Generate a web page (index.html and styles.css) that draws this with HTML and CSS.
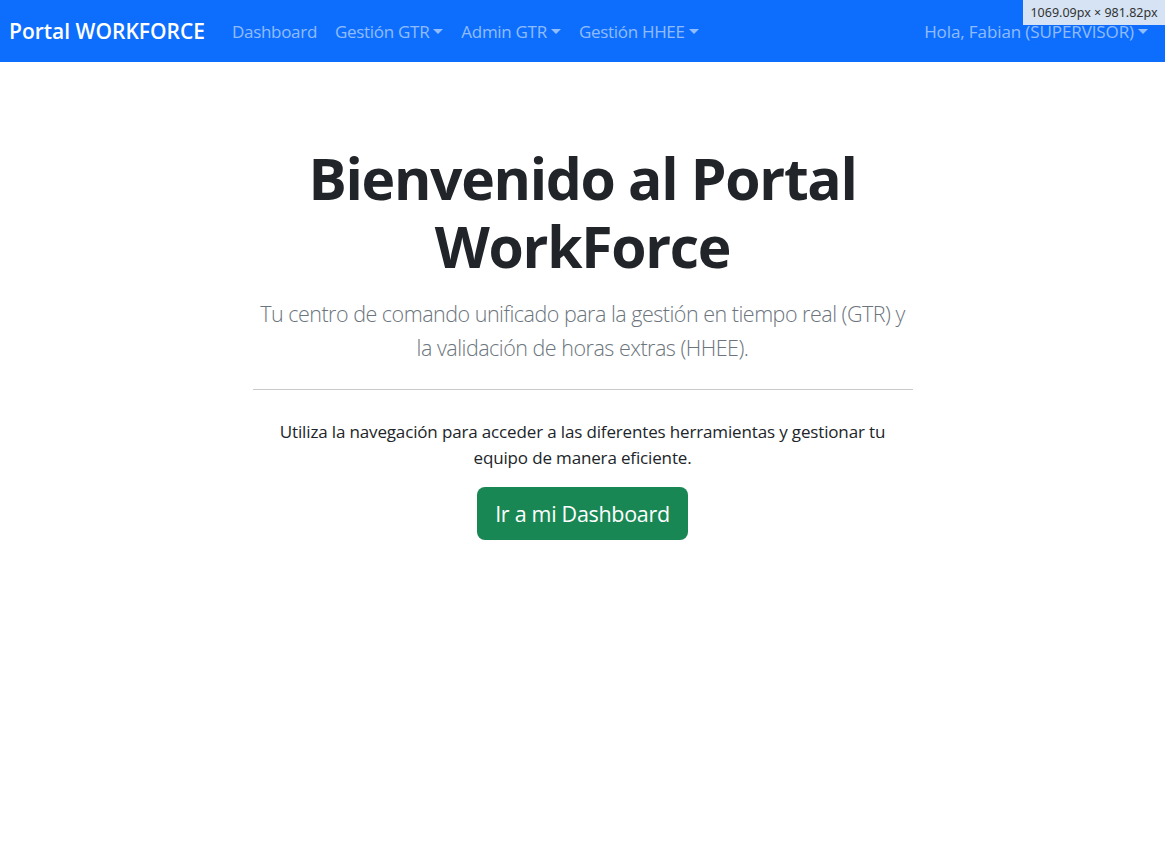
FILE: index.html
```html
<!DOCTYPE html>
<html lang="es">
<head>
<meta charset="utf-8">
<title>Portal WORKFORCE</title>
<link rel="stylesheet" href="styles.css">
</head>
<body>
<nav class="navbar">
  <div class="nav-inner">
    <a class="brand" href="#">Portal WORKFORCE</a>
    <ul class="nav-links">
      <li><a class="nav-link" href="#">Dashboard</a></li>
      <li><a class="nav-link dropdown" href="#">Gestión GTR</a></li>
      <li><a class="nav-link dropdown" href="#">Admin GTR</a></li>
      <li><a class="nav-link dropdown" href="#">Gestión HHEE</a></li>
    </ul>
    <ul class="nav-links nav-right">
      <li><a class="nav-link dropdown" href="#">Hola, Fabian (SUPERVISOR)</a></li>
    </ul>
  </div>
</nav>
<main class="hero">
  <h1 class="hero-title">Bienvenido al Portal WorkForce</h1>
  <p class="lead">Tu centro de comando unificado para la gestión en tiempo real (GTR) y la validación de horas extras (HHEE).</p>
  <hr class="divider">
  <p class="intro">Utiliza la navegación para acceder a las diferentes herramientas y gestionar tu equipo de manera eficiente.</p>
  <a class="btn-success" href="#">Ir a mi Dashboard</a>
</main>
<div class="size-tip">1069.09px × 981.82px</div>
</body>
</html>
```
FILE: styles.css
```css
* { box-sizing: border-box; }
html, body { margin: 0; padding: 0; }
body {
  font-family: "Open Sans", "Noto Sans", sans-serif;
  color: #212529;
  background: #fff;
  font-size: 17.4px;
  line-height: 1.5;
}
a { text-decoration: none; }

.navbar {
  background: #0d6efd;
  height: 62px;
}
.nav-inner {
  height: 100%;
  display: flex;
  align-items: center;
  padding: 1px 8px 0 9px;
}
.brand {
  color: #fff;
  font-size: 21px;
  font-weight: 600;
  margin-right: 18px;
  white-space: nowrap;
}
.nav-links {
  list-style: none;
  margin: 0;
  padding: 0;
  display: flex;
}
.nav-right { margin-left: auto; }
.nav-link {
  display: block;
  color: rgba(255, 255, 255, 0.55);
  font-size: 17px;
  letter-spacing: -0.3px;
  padding: 8px 9px;
  white-space: nowrap;
}
.nav-right .nav-link { letter-spacing: -0.1px; }
.dropdown::after {
  content: "";
  display: inline-block;
  margin-left: 4px;
  vertical-align: 4px;
  border-top: 5px solid;
  border-left: 5px solid transparent;
  border-right: 5px solid transparent;
}

.hero {
  width: 660px;
  margin: 0 auto;
  padding-top: 82px;
  text-align: center;
}
.hero-title {
  margin: 0 0 17px;
  font-size: 57px;
  line-height: 68px;
  font-weight: 700;
  letter-spacing: -1.3px;
  color: #212529;
}
.lead {
  margin: 0;
  font-size: 21.5px;
  line-height: 34px;
  font-weight: 300;
  letter-spacing: -0.5px;
  color: #6c757d;
}
.divider {
  margin: 24px 0 0;
  border: 0;
  border-top: 1px solid #c8c9ca;
}
.intro {
  margin: 29px 0 17px;
  font-size: 17px;
  line-height: 25.5px;
  letter-spacing: -0.15px;
}
.btn-success {
  display: inline-block;
  background: #198754;
  color: #fff;
  font-size: 21.5px;
  line-height: 34px;
  letter-spacing: -0.3px;
  padding: 9.5px 18px;
  border-radius: 8px;
}

.size-tip {
  position: absolute;
  top: 0;
  right: 0;
  width: 142px;
  height: 25px;
  background: #d5e3f4;
  color: #333;
  font-size: 12.5px;
  line-height: 25px;
  text-align: center;
  font-family: "Noto Sans", sans-serif;
}
```
